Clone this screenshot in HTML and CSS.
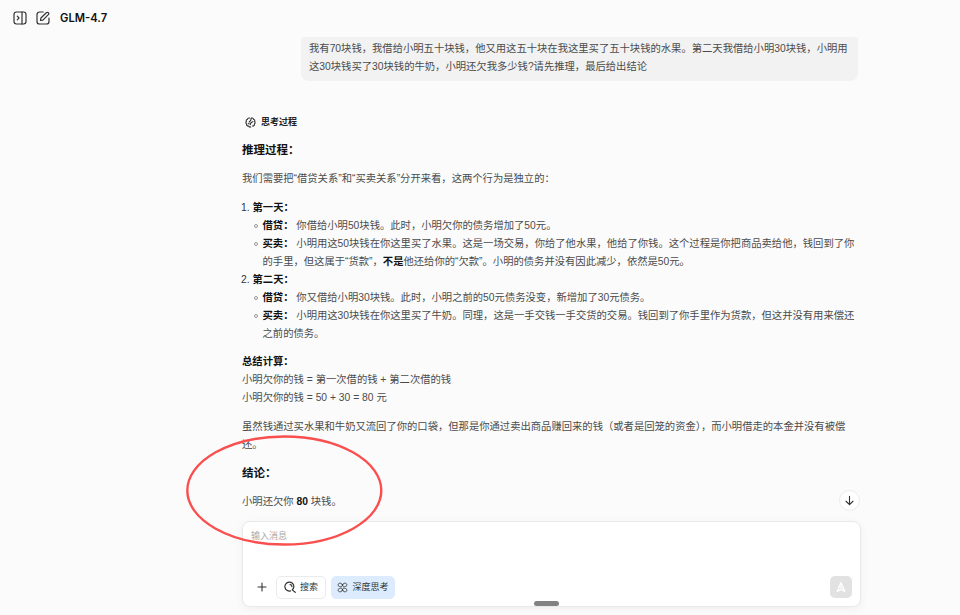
FILE: index.html
```html
<!DOCTYPE html>
<html lang="zh-CN">
<head>
<meta charset="utf-8">
<title>GLM-4.7</title>
<link rel="stylesheet" href="styles.css">
</head>
<body>
<div class="app">
  <header class="topbar">
    <svg class="top-icon" viewBox="0 0 14 14"><rect x="1" y="1" width="12" height="12" rx="2.4"/><path d="M9 1v12M4.3 5.2 6 7 4.3 8.8"/></svg>
    <svg class="top-icon" viewBox="0 0 14 14"><path d="M7.2 1H3.6A2.6 2.6 0 0 0 1 3.6v6.8A2.6 2.6 0 0 0 3.6 13h6.8a2.6 2.6 0 0 0 2.6-2.6V7.2"/><path d="M4.500 9.500l.4-2.500 5.400-5.300a1.400 1.400 0 0 1 2 2L6.900 9.100z"/></svg>
    <h1 class="model">GLM-4.7</h1>
  </header>
  <main class="chat">
    <div class="bubble">我有70块钱，我借给小明五十块钱，他又用这五十块在我这里买了五十块钱的水果。第二天我借给小明30块钱，小明用<br>这30块钱买了30块钱的牛奶，小明还欠我多少钱?请先推理，最后给出结论</div>
    <div class="think">
      <svg class="think-icon" viewBox="0 0 12 12"><path d="M5.200 1.200C4 .7 3 1.300 2.800 2.400 1.600 2.700 1 3.800 1.500 4.800.7 5.800.9 7.100 1.700 7.600 1.700 9 2.700 9.900 3.800 9.900 4.500 11.100 5.600 11.200 6.400 10.800M6.800 1.200C8 .7 9 1.300 9.200 2.400 10.400 2.700 11 3.800 10.500 4.800 11.300 5.800 11.100 7.100 10.300 7.600 10.300 9 9.300 9.900 8.200 9.900M6.800 1.200 6.300 3.600 4.500 5.500M8.700 5 6.500 6.300 5.600 8.500M3.500 7.500l1-.5"/></svg>
      <span>思考过程</span>
    </div>
    <article class="answer">
      <h3>推理过程：</h3>
      <p>我们需要把“借贷关系”和“买卖关系”分开来看，这两个行为是独立的：</p>
      <ol class="days">
        <li><b>第一天：</b>
          <ul>
            <li><b>借贷：</b> 你借给小明50块钱。此时，小明欠你的债务增加了50元。</li>
            <li><b>买卖：</b> 小明用这50块钱在你这里买了水果。这是一场交易，你给了他水果，他给了你钱。这个过程是你把商品卖给他，钱回到了你<br>的手里，但这属于“货款”，<b>不是</b>他还给你的“欠款”。小明的债务并没有因此减少，依然是50元。</li>
          </ul>
        </li>
        <li><b>第二天：</b>
          <ul>
            <li><b>借贷：</b> 你又借给小明30块钱。此时，小明之前的50元债务没变，新增加了30元债务。</li>
            <li><b>买卖：</b> 小明用这30块钱在你这里买了牛奶。同理，这是一手交钱一手交货的交易。钱回到了你手里作为货款，但这并没有用来偿还<br>之前的债务。</li>
          </ul>
        </li>
      </ol>
      <p><b>总结计算：</b><br>小明欠你的钱 = 第一次借的钱 + 第二次借的钱<br>小明欠你的钱 = 50 + 30 = 80 元</p>
      <p>虽然钱通过买水果和牛奶又流回了你的口袋，但那是你通过卖出商品赚回来的钱（或者是回笼的资金），而小明借走的本金并没有被偿<br>还。</p>
      <h3>结论：</h3>
      <p>小明还欠你 <b>80</b> 块钱。</p>
    </article>
  </main>
  <button class="to-bottom" aria-label="向下"><svg viewBox="0 0 12 12"><path d="M6 1.500v9M2.200 6.800 6 10.500 9.800 6.800"/></svg></button>
  <section class="composer">
    <div class="placeholder">输入消息</div>
    <div class="tools">
      <svg class="plus" viewBox="0 0 10 10"><path d="M5 1v8M1 5h8"/></svg>
      <button class="chip"><svg viewBox="0 0 12 12"><path d="M6.500 9.900A4.500 4.500 0 1 1 9.900 5.500C9.900 7 9 8.200 8.200 8.900L11.200 11.300M6 3.300A2.500 2.500 0 0 1 8 5.600"/></svg><span>搜索</span></button>
      <button class="chip chip-on"><svg viewBox="0 0 12 12"><path d="M6 3.300C5.500.5 1.200.6 1.200 3.200 1.200 4.700 2.500 5 4 5.200 5.300 5.400 6 4.500 6 3.300zM6 3.300C6.500.5 10.800.6 10.800 3.200 10.800 4.700 9.500 5 8 5.200 6.700 5.400 6 4.500 6 3.300zM6 8.700C5.500 11.500 1.200 11.400 1.200 8.800 1.200 7.300 2.500 7 4 6.800 5.300 6.600 6 7.500 6 8.700zM6 8.700C6.500 11.500 10.800 11.400 10.800 8.800 10.800 7.300 9.500 7 8 6.800 6.700 6.600 6 7.500 6 8.700z"/></svg><span>深度思考</span></button>
      <button class="send" aria-label="发送"><svg viewBox="0 0 12 12"><path d="M6 1.700 2.200 10.300 6 8.300l3.800 2zM6 5.200v3"/></svg></button>
    </div>
  </section>
  <div class="handle"></div>
  <svg class="mark" viewBox="0 0 200 116"><ellipse cx="100.300" cy="57.500" rx="97" ry="54"/></svg>
</div>
</body>
</html>
```
FILE: styles.css
```css
*, *::before { box-sizing: border-box; }
body {
  margin: 0;
  background: #fbfbfb;
  color: #4b4b4b;
  font: 10.325px/18px "Liberation Sans", "Noto Sans CJK SC", sans-serif;
}
.app { position: relative; width: 960px; height: 615px; overflow: hidden; }
svg { fill: none; stroke: currentColor; stroke-linecap: round; stroke-linejoin: round; }
b { color: #111; font-weight: 700; }
button { font: inherit; color: inherit; padding: 0; margin: 0; }

.topbar { display: flex; align-items: center; height: 37px; padding: 0 0 1px 13px; color: #333; }
.top-icon { width: 14px; height: 14px; margin-right: 9px; stroke-width: 1.2; }
.model { margin: 0 0 0 1px; font-family: Inter, sans-serif; font-size: 11.2px; font-weight: 600; color: #111; }

.chat { width: 616px; margin-left: 242px; white-space: nowrap; }
.bubble {
  width: 557px;
  height: 44px;
  margin-left: 59px;
  padding: 3px 8px;
  background: #f2f2f2;
  border-radius: 3px 3px 8px 8px;
}
.think { display: flex; align-items: center; gap: 5px; margin: 32px 0 0 3px; font-size: 9px; font-weight: 700; color: #222; }
.think-icon { width: 11px; height: 11px; stroke-width: 1.1; }

.answer h3 { margin: 0; font-size: 11.5px; line-height: 18px; font-weight: 700; color: #111; }
.answer > h3:first-child { margin-top: 10px; }
.answer p { margin: 10px 0; }
.answer h3 + p { margin-top: 11px; }
.answer .days { margin: 11px 0 10px; }
.answer .days + p { margin-bottom: 11px; }
.days { padding-left: 10.500px; list-style: none; counter-reset: day; }
.days > li { counter-increment: day; }
.days > li::before { content: counter(day) "."; display: inline-block; width: 11.500px; margin-left: -11.500px; color: #333; }
.days ul { margin: 0; padding: 0; list-style: none; }
.days ul li { padding-left: 10px; }
.days ul li::before {
  content: "";
  display: inline-block;
  width: 4px;
  height: 4px;
  margin: 0 5px 1px -9px;
  border: 1px solid #999;
  border-radius: 50%;
}

.to-bottom {
  position: absolute;
  left: 839px;
  top: 490px;
  display: grid;
  place-items: center;
  width: 21px;
  height: 21px;
  background: #fff;
  border: 1px solid #ebebeb;
  border-radius: 50%;
}
.to-bottom svg { width: 11px; height: 11px; stroke-width: 1.2; color: #333; }

.composer {
  position: absolute;
  left: 242px;
  top: 521px;
  display: flex;
  flex-direction: column;
  justify-content: space-between;
  width: 618.500px;
  height: 85.500px;
  padding: 5px 8px 7px 8px;
  background: #fff;
  border: 1px solid #e9e9e9;
  border-radius: 8px;
  box-shadow: 0 2px 10px rgba(0, 0, 0, .05);
}
.placeholder { font-size: 9px; color: #aaa; }
.tools { display: flex; align-items: center; }
.plus { width: 10px; height: 10px; margin: 0 9px 0 6px; color: #333; stroke-width: 1.1; }
.chip {
  display: flex;
  align-items: center;
  justify-content: center;
  gap: 4px;
  width: 50px;
  height: 23px;
  margin-right: 5px;
  background: #fff;
  border: 1px solid #ebebeb;
  border-radius: 5px;
  font-size: 9px;
  color: #333;
}
.chip svg { width: 12px; height: 12px; stroke-width: 1.2; }
.chip-on { width: 64px; background: #dcecfe; border-color: #dcecfe; }
.chip-on svg { width: 11px; height: 11px; stroke-width: .9; }
.send {
  display: grid;
  place-items: center;
  width: 22px;
  height: 22px;
  margin-left: auto;
  background: #e2e2e2;
  border: 0;
  border-radius: 5px;
  color: #fff;
}
.send svg { width: 12px; height: 12px; stroke-width: 1.3; }
.handle { position: absolute; left: 534px; top: 601px; width: 25px; height: 5px; border-radius: 3px; background: #828282; }
.mark { position: absolute; left: 184px; top: 433px; width: 200px; height: 116px; stroke: #fa4f4f; stroke-width: 2.4; }
```
